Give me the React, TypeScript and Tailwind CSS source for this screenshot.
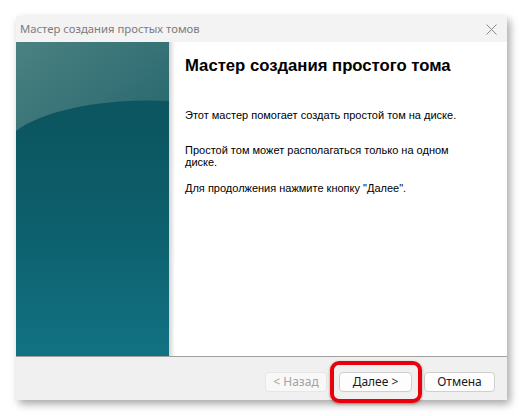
import React from "react";

const ui = { fontFamily: '"Noto Sans", "Open Sans", sans-serif' };
const body = { fontFamily: '"Liberation Sans", Arial, sans-serif' };

function SidePanel() {
  return (
    <div className="relative w-[153px] h-full overflow-hidden bg-[linear-gradient(180deg,#0b5660_25%,#0d606d_60%,#127283_100%)]">
      <svg className="absolute inset-0" width="153" height="314" viewBox="0 0 153 314">
        <defs>
          <linearGradient id="cap" x1="0" y1="0" x2="1" y2="0.7">
            <stop offset="0" stopColor="#4b8181" />
            <stop offset="1" stopColor="#2b6a71" />
          </linearGradient>
        </defs>
        <path d="M0 0 H153 V59 C95 56 30 66 0 89 Z" fill="url(#cap)" />
      </svg>
    </div>
  );
}

function Btn({ label, disabled }: { label: string; disabled?: boolean }) {
  return (
    <div
      className={
        disabled
          ? "h-[20px] flex items-center justify-center rounded-[4px] border border-[#e6e6e6] bg-[#f8f8f8] text-[#a3a3a3] text-[12px]"
          : "h-[20px] flex items-center justify-center rounded-[4px] border border-[#cfcfcf] bg-[#fdfdfd] text-[#1a1a1a] text-[12px]"
      }
      style={ui}
    >
      {label}
    </div>
  );
}

export default function App() {
  return (
    <div className="w-[523px] h-[416px] bg-white pl-[16px] pt-[16px]">
      <div className="w-[491px] h-[384px] flex flex-col bg-[#f0f0f0] shadow-[3px_4px_8px_rgba(0,0,0,0.35)]">
        <div className="h-[26px] bg-[#f3f3f3] flex items-center justify-between pl-[4px] pr-[10px]">
          <span className="text-[11.3px] text-[#7b7b7b]" style={ui}>
            Мастер создания простых томов
          </span>
          <svg width="11" height="11" viewBox="0 0 11 11">
            <path d="M0.5 0.5 L10.5 10.5 M10.5 0.5 L0.5 10.5" stroke="#8a8a8a" strokeWidth="1" />
          </svg>
        </div>
        <div className="h-[314px] flex bg-white">
          <SidePanel />
          <div className="w-[6px] h-full bg-[linear-gradient(90deg,#d4d4d4,#ffffff)]" />
          <div className="flex-1 pl-[10px] pt-[14px] text-black">
            <div className="text-[16.7px] font-bold leading-[20px]" style={body}>
              Мастер создания простого тома
            </div>
            <div className="mt-[33px] text-[11px] leading-[12px] flex flex-col gap-[23px]" style={body}>
              <p>Этот мастер помогает создать простой том на диске.</p>
              <p>
                Простой том может располагаться только на одном
                <br />
                диске.
              </p>
              <p className="-mt-[9px]">Для продолжения нажмите кнопку "Далее".</p>
            </div>
          </div>
        </div>
        <div className="h-[1px] bg-[#a0a0a0]" />
        <div className="flex-1 relative flex items-start pt-[15px] pl-[249px] gap-[12px]">
          <div className="w-[62px]">
            <Btn label="< Назад" disabled />
          </div>
          <div className="w-[73px]">
            <Btn label="Далее >" />
          </div>
          <div className="w-[71px]">
            <Btn label="Отмена" />
          </div>
          <div className="absolute left-[314px] top-[4px] w-[92px] h-[42px] rounded-[9px] border-[4px] border-[#e8000b] shadow-[0_1px_3px_rgba(0,0,0,0.35)]" />
        </div>
      </div>
    </div>
  );
}
